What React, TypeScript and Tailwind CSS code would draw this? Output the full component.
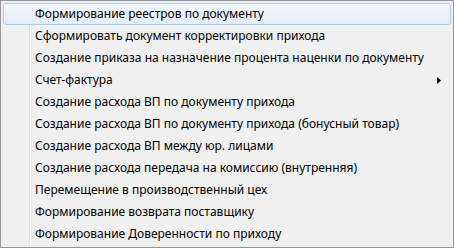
const ITEMS = [
  { label: 'Формирование реестров по документу', active: true },
  { label: 'Сформировать документ корректировки прихода' },
  { label: 'Создание приказа на назначение процента наценки по документу' },
  { label: 'Счет-фактура', submenu: true },
  { label: 'Создание расхода ВП по документу прихода' },
  { label: 'Создание расхода ВП по документу прихода (бонусный товар)' },
  { label: 'Создание расхода ВП между юр. лицами' },
  { label: 'Создание расхода передача на комиссию (внутренняя)' },
  { label: 'Перемещение в производственный цех' },
  { label: 'Формирование возврата поставщику' },
  { label: 'Формирование Доверенности по приходу' },
];

export default function App() {
  return (
    <div
      className="w-[454px] h-[248px] border border-[#979797] bg-[#f0f0f0] p-[2px] relative text-[12px] text-black"
      style={{ fontFamily: '"Noto Sans", "Open Sans", sans-serif' }}
    >
      {/* gutter separator */}
      <div className="absolute top-[2px] bottom-[2px] left-[28px] w-px bg-[#e2e3e3]" />
      <div className="absolute top-[2px] bottom-[2px] left-[29px] w-px bg-white" />
      <div className="flex flex-col relative">
        {ITEMS.map((item) => (
          <div
            key={item.label}
            className={`h-[22px] flex items-center pl-[31px] pr-[9px] rounded-[3px] border ${
              item.active
                ? 'border-[#a8cbf3] bg-gradient-to-b from-[#f3f6fb] to-[#e6edf7]'
                : 'border-transparent'
            }`}
          >
            <span className="flex-1 leading-none">{item.label}</span>
            {item.submenu && (
              <svg width="4" height="7" viewBox="0 0 4 7">
                <path d="M0 0 L4 3.5 L0 7 Z" fill="#000" />
              </svg>
            )}
          </div>
        ))}
      </div>
    </div>
  );
}
